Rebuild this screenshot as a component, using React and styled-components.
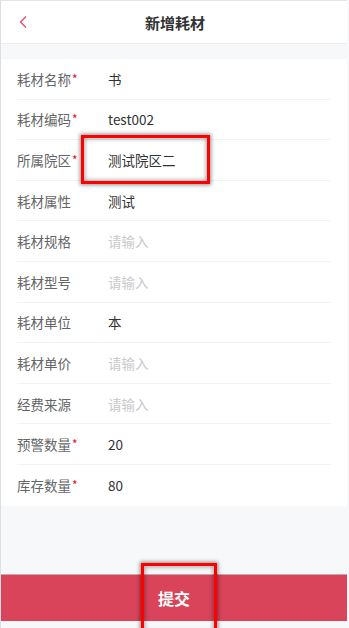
import React from 'react'
import styled, { createGlobalStyle } from 'styled-components'

const GlobalStyle = createGlobalStyle`
    html, body {
        margin: 0;
        padding: 0;
        background: #f7f8fa;
        font-family: "Noto Sans CJK SC", "Noto Sans", sans-serif;
    }
`

const fields = [
    { label: '耗材名称', value: '书', required: true },
    { label: '耗材编码', value: 'test002', required: true },
    { label: '所属院区', value: '测试院区二', required: true },
    { label: '耗材属性', value: '测试' },
    { label: '耗材规格', placeholder: '请输入' },
    { label: '耗材型号', placeholder: '请输入' },
    { label: '耗材单位', value: '本' },
    { label: '耗材单价', placeholder: '请输入' },
    { label: '经费来源', placeholder: '请输入' },
    { label: '预警数量', value: '20', required: true },
    { label: '库存数量', value: '80', required: true },
]

function App() {
    return (
        <>
            <GlobalStyle />
            <Page>
                <NavBar>
                    <Back>
                        <svg width="10" height="14" viewBox="0 0 10 14">
                            <path d="M8 1.5 L2.5 7 L8 12.5" fill="none" stroke="#e8516a" strokeWidth="1.4" />
                        </svg>
                    </Back>
                    <Title>新增耗材</Title>
                    <span />
                </NavBar>
                <Form>
                    {fields.map((f) => (
                        <Row key={f.label}>
                            <Label>
                                {f.label}
                                {f.required && <Star>*</Star>}
                            </Label>
                            <Value $empty={!f.value}>{f.value || f.placeholder}</Value>
                        </Row>
                    ))}
                </Form>
                <Footer>
                    <Submit>提交</Submit>
                </Footer>
                <Mark style={{ left: 80, top: 134, width: 129, height: 49 }} />
                <Mark style={{ left: 140, top: 562, width: 76, height: 72 }} />
            </Page>
        </>
    )
}

const Page = styled.div`
    position: relative;
    width: 346px;
    height: 627px;
    border-top: 1px solid #e3e5ea;
    border-left: 1px solid #dcdee5;
    background: #f7f8fa;
    overflow: hidden;
`

const NavBar = styled.div`
    height: 42px;
    background: #fff;
    border-bottom: 1px solid #ebedf0;
    display: grid;
    grid-template-columns: 1fr auto 1fr;
    align-items: center;
`

const Back = styled.div`
    display: flex;
    padding-left: 17px;
`

const Title = styled.div`
    font-size: 15px;
    font-weight: 700;
    color: #323233;
    padding-left: 2px;
`

const Form = styled.div`
    margin-top: 15px;
    background: #fff;
`

const Row = styled.div`
    box-sizing: border-box;
    height: 40.6px;
    margin: 0 16px;
    display: flex;
    align-items: center;
    font-size: 13.5px;
    border-bottom: 1px solid #f2f3f5;
    &:last-child {
        border-bottom: none;
    }
`

const Label = styled.div`
    width: 91px;
    flex-shrink: 0;
    color: #646566;
`

const Star = styled.span`
    color: #ee0a24;
    font-size: 12px;
    position: relative;
    top: -1px;
    margin-left: 1px;
`

const Value = styled.div`
    color: ${(p) => (p.$empty ? '#c8c9cc' : '#323233')};
`

const Footer = styled.div`
    margin-top: 68px;
    border-top: 1px solid #c9a7ad;
`

const Submit = styled.div`
    height: 46px;
    background: #d9445a;
    color: #fff;
    font-size: 16px;
    font-weight: 700;
    display: flex;
    align-items: center;
    justify-content: center;
`

const Mark = styled.div`
    position: absolute;
    box-sizing: border-box;
    border: 3px solid #ff0000;
    box-shadow: 0 0 4px 1px rgba(0, 0, 0, 0.45), inset 0 0 4px 1px rgba(0, 0, 0, 0.35);
    pointer-events: none;
`

export default App
